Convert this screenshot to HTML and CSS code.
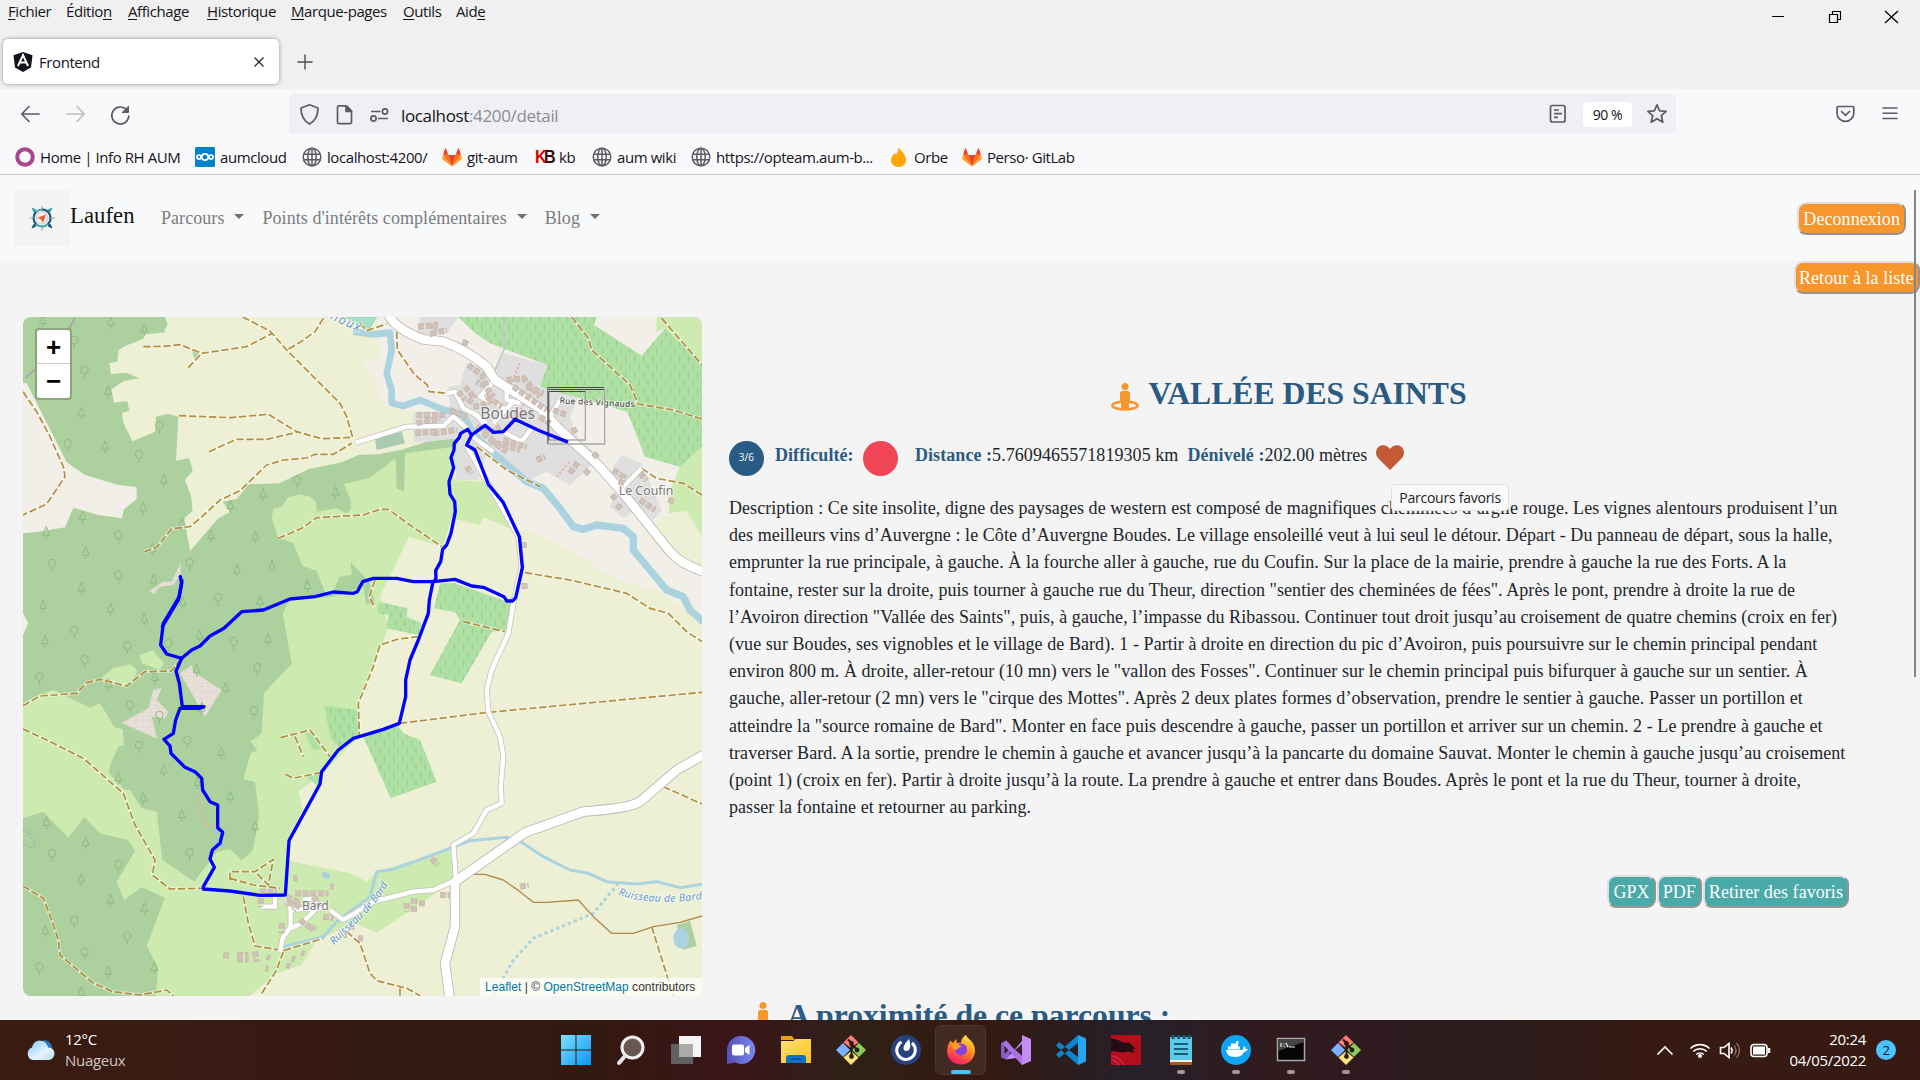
FILE: index.html
```html
<!DOCTYPE html>
<html lang="fr">
<head>
<meta charset="utf-8">
<title>Frontend</title>
<link rel="stylesheet" href="styles.css">
</head>
<body>
<svg class="defs" width="0" height="0">
  <defs>
    <symbol id="globe" viewBox="0 0 20 20"><g fill="none" stroke="#5b5b66" stroke-width="1.5"><circle cx="10" cy="10" r="8.8"/><ellipse cx="10" cy="10" rx="4.2" ry="8.8"/><path d="M1.5 7.3h17M1.5 12.7h17M10 1v18"/></g></symbol>
    <symbol id="gitlab" viewBox="0 0 20 20"><path d="M10 19.500 6.200 8h7.600z" fill="#e24329"/><path d="M10 19.500 0 12l1.200-4.500h5z" fill="#fca326"/><path d="M10 19.500 20 12l-1.200-4.500h-5z" fill="#fca326"/><path d="M10 19.500 1.200 7.500h5zM10 19.500l8.800-12h-5z" fill="#fc6d26"/><path d="M1.200 7.500 3.500.5l2.700 7zM18.800 7.500 16.500.5l-2.700 7z" fill="#e24329"/></symbol>
    <symbol id="git" viewBox="0 0 30 30"><path d="M15 0 22.500 7.500 15 13 7.500 7.500z" fill="#ff7b78"/><path d="M0 15 7 8l7 7-7 7z" fill="#7fb0ff"/><path d="m30 15-7-7-7 7 7 7z" fill="#86d05a"/><path d="M15 30 7.500 22.500 15 16l7.500 6.500z" fill="#ffe07a"/><path d="M12 4.500 15.500 8v13M15.500 9l5.500 5.500" stroke="#2c1a14" stroke-width="2" fill="none"/><circle cx="15.500" cy="8.500" r="2.400" fill="#2c1a14"/><circle cx="21" cy="15" r="2.400" fill="#2c1a14"/><circle cx="15.500" cy="21.500" r="2.400" fill="#2c1a14"/></symbol>
    <symbol id="person" viewBox="0 0 28 28"><ellipse cx="14" cy="22.500" rx="12.600" ry="4" fill="none" stroke="#f6962d" stroke-width="2.600"/><circle cx="14" cy="3.500" r="3.500" fill="#f6962d"/><path d="M11.500 8h5q2.500 0 2.500 2.500V17l-1 1v6q0 1-1 1h-6q-1 0-1-1v-6l-1-1v-6.500Q9 8 11.500 8z" fill="#f6962d"/></symbol>
    <pattern id="vine" width="27" height="48" patternUnits="userSpaceOnUse"><rect width="27" height="48" fill="#aedfa3"/><path d="M6 2v14M20 26v14" stroke="#94c48c" stroke-width="3"/></pattern>
    <pattern id="scree" width="22" height="22" patternUnits="userSpaceOnUse"><rect width="22" height="22" fill="#eae0d9"/><path d="M2 4l6 5M14 2l-4 7M17 13l-6 6M3 17l4-4M18 5l3 3" stroke="#c9bfc2" stroke-width="2"/></pattern>
    <linearGradient id="win" x1="0" y1="0" x2="1" y2="1"><stop offset="0" stop-color="#7fe0ff"/><stop offset="1" stop-color="#0a96f5"/></linearGradient>
    <linearGradient id="fox" x1=".8" y1="0" x2=".3" y2="1"><stop offset="0" stop-color="#fff04a"/><stop offset=".45" stop-color="#ff8a1d"/><stop offset="1" stop-color="#f5156c"/></linearGradient>
    <linearGradient id="cloud" x1="0" y1="0" x2="1" y2="1"><stop offset="0" stop-color="#7cc4f5"/><stop offset=".6" stop-color="#e4f4ff"/><stop offset="1" stop-color="#b9dcf5"/></linearGradient>
    <linearGradient id="folder" x1="0" y1="0" x2="1" y2="1"><stop offset="0" stop-color="#ffe07a"/><stop offset="1" stop-color="#ffc21a"/></linearGradient>
    <linearGradient id="chat" x1="0" y1="0" x2="1" y2="0"><stop offset="0" stop-color="#5450b8"/><stop offset="1" stop-color="#7b87ee"/></linearGradient>
  </defs>
</svg>

<header class="browser">
  <div class="titlebar">
    <nav class="menu"><span><u>F</u>ichier</span><span>Éditio<u>n</u></span><span><u>A</u>ffichage</span><span><u>H</u>istorique</span><span><u>M</u>arque-pages</span><span><u>O</u>utils</span><span>Aid<u>e</u></span></nav>
    <svg class="winbtns" width="130" height="24" fill="none" stroke="#000" stroke-width="1"><path d="M2 16.500h12"/><path d="M59.500 14.500h8v8h-8zM62.500 14v-2.500h8v8h-2.500" stroke-width="1.200"/><path d="M115 11l13 12M128 11l-13 12" stroke-width="1.300"/></svg>
  </div>
  <div class="tabs">
    <div class="tab">
      <svg width="20" height="20" viewBox="0 0 20 20"><path d="M10 0 19.500 3.200 18 15.500 10 20 2 15.500.5 3.200z" fill="#10121c"/><path d="M5 14 10 3l5 11M7 10.500h6" fill="none" stroke="#fff" stroke-width="1.900"/></svg>
      <span class="tab-title">Frontend</span>
      <svg width="10" height="10" stroke="#222" stroke-width="1.200"><path d="M.5.5l9 9M9.500.5l-9 9"/></svg>
    </div>
    <svg class="newtab" width="16" height="16" stroke="#4a4a55" stroke-width="1.400"><path d="M8 .5v15M.5 8h15"/></svg>
  </div>
  <div class="toolbar">
    <svg class="navicons" width="130" height="26" fill="none" stroke="#5b5b66" stroke-width="1.700" stroke-linecap="round" stroke-linejoin="round"><path d="M19 13H2M9 5.500 1.800 13 9 20.500"/><path d="M47 13h17M57 5.500 64.200 13 57 20.500" stroke="#bcbcc2"/><path d="M106 8.200a8.500 8.500 0 1 0 2.800 6.800"/><path d="M108.500 5.500v6h-6z" fill="#5b5b66" stroke-width="1"/></svg>
    <div class="urlbar">
      <svg width="90" height="24" fill="none" stroke="#5b5b66" stroke-width="1.700" stroke-linejoin="round"><path d="M9.500 2.800 18 6c0 7-2 12.500-8.500 16C3 18.500 1 13 1 6z"/><path d="M39 3.800h7.500l5 5v11.400a1.500 1.500 0 0 1-1.500 1.500H39a1.500 1.500 0 0 1-1.500-1.500V5.300a1.500 1.500 0 0 1 1.500-1.500z"/><path d="M46 4v5.500h5.500z" fill="#5b5b66"/><path d="M71 9.500h9.500M78 16.500h10"/><circle cx="85" cy="9.500" r="2.600"/><circle cx="73.500" cy="16.500" r="2.600"/></svg>
      <span class="url">localhost<i>:4200/detail</i></span>
      <svg class="reader" width="18" height="20" fill="none" stroke="#5b5b66" stroke-width="1.700"><rect x="1.500" y="1.500" width="14.500" height="16.500" rx="2"/><path d="M5 6h5M5 9.700h8M5 13.300h4" /></svg>
      <span class="zoom">90 %</span>
      <svg width="22" height="22" viewBox="0 0 22 22" fill="none" stroke="#5b5b66" stroke-width="1.700" stroke-linejoin="round"><path d="M11 1.800l2.700 6 6.500.6-4.900 4.300 1.500 6.500-5.800-3.400-5.800 3.400 1.500-6.500L1.800 8.400l6.500-.6z"/></svg>
    </div>
    <svg class="toolicons" width="66" height="20" fill="none" stroke="#5b5b66" stroke-width="1.700" stroke-linecap="round" stroke-linejoin="round"><path d="M4 2.500h14.500a1.300 1.300 0 0 1 1.300 1.300V9a8.200 8.200 0 0 1-16.800 0V3.800A1.300 1.300 0 0 1 4 2.500zM7.500 7.500l4 3.800 4-3.800"/><path d="M49 4h14M49 9.200h14M49 14.400h14" stroke-width="1.500"/></svg>
  </div>
  <div class="bookmarks">
    <span><svg width="20" height="20"><circle cx="10" cy="10" r="7.800" fill="none" stroke="#a8478f" stroke-width="4"/></svg>Home | Info RH AUM</span>
    <span><svg width="20" height="20"><rect width="20" height="20" rx="1.500" fill="#0082c9"/><g fill="none" stroke="#fff" stroke-width="1.700"><circle cx="10" cy="10" r="3.200"/><circle cx="4" cy="10" r="2"/><circle cx="16" cy="10" r="2"/></g></svg>aumcloud</span>
    <span><svg width="20" height="20"><use href="#globe"/></svg>localhost:4200/</span>
    <span><svg width="20" height="20"><use href="#gitlab"/></svg>git-aum</span>
    <span><b class="kb"><em>K</em>B</b>kb</span>
    <span><svg width="20" height="20"><use href="#globe"/></svg>aum wiki</span>
    <span><svg width="20" height="20"><use href="#globe"/></svg>https://opteam.aum-b...</span>
    <span><svg width="20" height="20"><path d="M9.500 0c2 4 7.500 7 7.500 13 0 4-3 7-7.500 7S2 17 2 13c0-3 2-5 3.500-7l1.500 2C8.500 6 9.500 3 9.500 0z" fill="#ffa400"/></svg>Orbe</span>
    <span><svg width="20" height="20"><use href="#gitlab"/></svg>Perso· GitLab</span>
  </div>
</header>

<main class="page">
  <nav class="navbar">
    <span class="logo"><svg width="28" height="28" viewBox="0 0 28 28" fill="none"><circle cx="14" cy="14" r="8.500" stroke="#3aa6a6" stroke-width="2"/><path d="M14 5.500a8.500 8.500 0 0 1 6 14.500M8 8a8.500 8.500 0 0 0 0 12" stroke="#27567f" stroke-width="2"/><circle cx="14" cy="14" r="6" stroke="#cfc6c0" stroke-width="1"/><path d="M14 2v4M14 22v5M1.500 14H6M22 14h5" stroke="#8aa"/><path d="M4 4l4 2-2 2zM24 4l-4 2 2 2z" fill="#3aa6a6" stroke="#3aa6a6"/><path d="M4 24l4-2-2-2zM24 24l-4-2 2-2z" fill="#27567f" stroke="#27567f"/><path d="M18 10.500 9 14l4 1.200L15 19z" fill="#f0582f"/></svg></span>
    <a class="brand">Laufen</a>
    <a class="item">Parcours<i></i></a>
    <a class="item">Points d'intérêts complémentaires<i></i></a>
    <a class="item">Blog<i></i></a>
    <button class="btn orange">Deconnexion</button>
  </nav>
  <div class="back"><button class="btn orange">Retour à la liste</button></div>
  <div class="content">
    <div class="map">
      <svg width="679" height="679" viewBox="69 951 2037 2037">
        <rect x="69" y="951" width="2037" height="2037" fill="#edf0d5"/>
        <g fill="#cdebb0">
          <path d="M69 1700H810V1480L1190 1355 1375 1315 1360 1440 1450 1445 1510 1530 1540 1590 1450 1552 1438 1575 1355 1555 1328 1640 1227 1610 1140 1790 1165 1880 1140 1950 1075 2110 1080 2205 975 2315 895 2375 908 2430 860 2520 865 2582 1050 2620 1100 2645 1130 2615 1350 2545 1365 2640 1220 2740 1130 2798 1065 2770 950 2820 905 2895 830 2920 750 2988H69Z"/>
          <path d="M1970 951h136v140l-111-106-27 12z"/>
        </g>
        <g transform="translate(1020 900)">
          <path fill="#f2efe9" d="M110 51 125 180 75 185 80 215 110 228 115 290 150 325 220 330 350 430 440 545 520 690 580 690 840 840 960 872 1086 970V610L995 560 1020 500 915 470 862 335 975 85 948 97 950 51Z"/>
          <path fill="#edf0d5" d="M915 710 970 650 1040 630 1086 685V830Z"/>
          <path fill="#cdebb0" d="M995 560 1020 500 1086 440V710L1040 632 985 640Z"/>
          <path fill="#e0dfdf" d="M240 51H355L320 100 230 105ZM380 190 465 210 490 160 620 195 600 260 715 290 690 350 715 420 780 470 690 555 620 515 560 545 440 460 415 540 350 540 340 430 220 425 220 335 330 335 325 260 360 255 370 220ZM820 500 845 465 905 490 965 630 940 660 900 620 850 655 810 620 830 570Z"/>
          <path fill="url(#vine)" d="M355 51H770L762 75 905 167 975 85 1086 190V440L1020 500 915 470 862 335 600 260 622 195 450 130 400 95ZM300 850 345 850 500 905 522 910 500 990 455 995 365 1150 270 1125 360 960 345 937 282 925ZM118 905 203 925 200 950 245 970 235 1005 140 985 145 945 112 940Z"/>
          <path fill="#aacbaf" d="M105 415 185 395 195 430 110 450Z"/>
          <path fill="#a9dfc9" stroke="#83cfb2" stroke-width="2" d="M15 51H110L85 90Z"/>
        </g>
        <g transform="translate(0 900)" fill="#add19e">
          <path d="M69 51H495L503 75 492 92 497 97 437 103 430 116 370 140 355 152 352 185 328 190 333 222 380 218 418 235 372 243 334 268 342 308 382 303 388 332 366 338 370 370 398 424 465 395 468 350 505 341 535 350 528 482 568 474 578 513 555 540 573 588 578 632 553 655 560 700 571 752 655 655 690 636 668 605 710 597 745 553 838 550 925 508 1025 487 1075 465 1140 462 1210 448 1280 425 1378 415 1365 440 1215 460 1212 575 1190 565 1187 475 1110 533 1032 552 1052 600 1052 630 1040 640 1010 625 950 635 948 605 930 590 900 583 865 592 845 620 820 628 815 655 835 715 880 728 907 797 950 812 975 875 1000 875 1018 830 1055 825 1052 785 1110 850 1125 910 1098 912 1090 860 1000 890 870 900 848 940 873 1080 876 1090 792 1180 785 1300 752 1325 772 1350 752 1360 730 1438 765 1445 777 1550 758 1652 725 1680 690 1648 650 1655 583 1745 487 1680 470 1535 425 1525 390 1470 375 1470 327 1420 330 1395 355 1340 372 1335 368 1288 343 1282 300 1210 270 1223 160 1170 105 1190 69 1210Z"/>
          <path d="M69 1555 130 1535 205 1613 253 1552 300 1600 383 1620 405 1653 350 1745 372 1800 425 1762 495 1793 440 1938 475 2005 467 2088H69ZM575 150 600 155 585 180ZM2030 1875l40-12 20 75-40 12Z"/>
          <path fill="#f2efe9" d="M69 248 80 250 200 487 255 525 355 555 410 562 410 597 372 628 365 655 295 645 220 623 195 682 115 695 69 700ZM69 940 85 970 69 1005Z"/>
          <path fill="#cdebb0" d="M305 1132 340 1105 390 1092 412 1110 405 1130 375 1160ZM420 1065 457 1050 492 1090 480 1110 425 1090Z"/>
          <path fill="url(#scree)" d="M541 790 543 820 520 855 480 860 462 882 448 872 490 845 515 845ZM540 1120 575 1095 580 1115 665 1170 615 1250 575 1180ZM485 1163 470 1200 505 1235 495 1255 455 1250 472 1317 365 1268 445 1225 460 1170Z"/>
          <path fill="url(#vine)" d="M973 1218 985 1218 1070 1230 1080 1305 1015 1340 990 1310ZM1090 1310 1195 1278 1210 1300 1260 1320 1310 1445 1172 1495Z"/>
          <path fill="#aedfa3" d="M915 1300 935 1295 970 1345 940 1350ZM920 1430 965 1415 955 1460Z"/>
        </g>
        <g transform="translate(0 900)" fill="none" stroke="#8fb983" stroke-width="3" class="trees"></g>
        <g transform="translate(0 900)" fill="none" stroke="#a9a0ad" stroke-width="5"><path d="M225 55 205 90M77 233 105 208"/><path stroke-dasharray="5 7" d="M69 1590 90 1600 105 1635 95 1642 69 1635"/></g>

        <g fill="none" stroke="#aad3df" stroke-linejoin="round">
          <path stroke-width="20" d="M1060 995 1120 1003 1170 998 1175 1050 1160 1120 1175 1170 1175 1210 1210 1218 1260 1200 1320 1225 1390 1245 1420 1300 1480 1360"/>
          <path stroke-width="22" d="M1480 1360 1580 1445 1630 1465 1680 1525 1720 1580 1750 1588 1790 1575 1870 1585 1900 1610 1900 1650 2000 1770 2050 1790 2070 1830 2110 1865"/>
          <path stroke-width="9" d="M850 2840 970 2810 1010 2765 1110 2690 1130 2615 1180 2608 1350 2545 1410 2522 1520 2512 1565 2527 1630 2570 1710 2610 1765 2620 1820 2645 1910 2652 1970 2645 2040 2663 2110 2652"/>
          <path stroke-width="9" stroke-dasharray="10 9" d="M1855 2650 1780 2740 1600 2815 1540 2880 1480 2988"/>
        </g>
        <ellipse cx="2044" cy="2815" rx="24" ry="31" fill="#aad3df"/><ellipse cx="978" cy="2627" rx="14" ry="9" transform="rotate(30 978 2627)" fill="#aad3df"/>

        <g class="tracks" fill="none">
          <g id="tracklines">
            <g transform="translate(0 900)"><path d="M728 51 810 93 860 150 1020 310 1040 350 1058 412M430 140 490 139 540 134 605 160 740 140 815 101M565 203 605 160M970 55 945 95 900 127 860 150M537 347 690 353 805 343 890 395 965 416 1058 412M627 455 710 418 800 418 890 397M433 755 470 742 515 686 570 680 600 655 660 600 720 572 800 495 850 480 920 474 945 463 1000 463 1055 430M69 275 110 335 150 410 190 500 195 530 140 612 69 645M835 715 905 685 950 653 1090 645 1140 628 1165 628 1230 675 1325 740M1125 840 1108 890 1125 925M1255 1010 1195 1017 1140 1035 1120 1100 1075 1210 1078 1305"/></g>
            <g transform="translate(1020 900)"><path d="M60 70 80 92 140 72M170 95 172 150 225 225 262 255 268 275 320 280M695 51 745 115 755 150 870 255 895 312 1000 330 1086 357M965 55 1086 195M905 505 950 535 1030 550 1086 585M555 818 690 840 860 880 930 925 985 940 1040 995 1086 1025M370 965 495 995M410 440 500 510 600 560"/></g>
            <g transform="translate(1020 1920)"><path d="M180 250 445 217 1086 157M970 440 1086 492M935 860 1000 1068M20 875 60 910 90 1000 110 1022 200 1045 240 1067M180 1045V1067"/></g>
            <g transform="translate(0 1920)"><path d="M69 197 120 168 230 160 260 128 300 118 380 138 435 95 515 93 540 60M69 267 150 305 250 355 370 460 405 555 465 660 457 705 510 747 605 745M69 738 130 775 155 840 175 900 180 945 280 1030 340 1055 420 1065 500 1050 520 1068M730 770 745 850 765 918 850 932 970 895M850 935 830 990 780 1068M690 720V695L765 695 820 658 805 735 765 695M690 715 760 735 840 745M842 293 930 270 990 350M885 290 910 350M857 403 880 415 960 398"/></g>
          </g>
          <use href="#tracklines" class="dash"/>
          <path class="solid" d="M1410 2623 1455 2623 1510 2640 1560 2675 1600 2707 1640 2707 1735 2700 1780 2750 1835 2800 1900 2800 1960 2780 2040 2767 2110 2747"/>
        </g>
        <path d="M595 2375 600 2440 620 2475 650 2480M1560 1090 1530 1160M1610 1160 1560 1230M1670 1430 1710 1385M1470 1170 1450 1210" fill="none" stroke="#f5a29a" stroke-width="5" stroke-dasharray="6 7"/>

        <g class="roads" fill="none" stroke-linejoin="round">
          <g class="minor"><g id="minor">
            <g transform="translate(1020 900)"><path d="M48 428 200 380 310 378 340 350 370 375 410 420 460 455M320 280 345 275 370 325 410 345 435 375M455 250 420 290 500 330M500 265 500 300 540 310M490 395 545 425 575 385M525 300 460 370M400 340 440 370M630 350 660 300M850 560 905 505M380 440 450 560 535 710 545 800 520 910 505 1000 455 1110 440 1170 445 1235 480 1310 490 1370 482 1460 485 1510 440 1530 400 1600 340 1635 348 1740 280 1770 220 1775 100 1805 10 1860 -30 1830"/></g>
            <g transform="translate(0 1920)"><path d="M857 765 872 810 872 860 848 895 840 935M872 810 930 805 985 800M872 865 905 850 955 800 940 775 910 780M785 800H825V770"/></g>
          </g></g>
          <path class="thin" d="M1520 951 1505 995 1520 1030 1485 1110"/>
          <g class="major"><g id="major"><path d="M1165 940Q1180 985 1270 1018L1330 1025Q1400 1050 1460 1100L1485 1140 1620 1225 1680 1290 1790 1390 1870 1480 2010 1655Q2040 1690 2110 1715M2110 2265 2030 2310 1920 2405Q1890 2425 1750 2435L1575 2498 1365 2645V2780L1335 2890 1350 3000"/></g></g>
          <use href="#minor" class="minor-fill"/>
          <use href="#major" class="major-fill"/>
        </g>

        <g class="buildings" fill="none">
          <g id="blds">
            <g transform="translate(1020 900)"><path d="M235 80 285 75 280 100 320 90M368 125 385 133M385 195 425 225 440 260 410 245M375 260 400 290 385 310M355 275 375 300M400 320 430 315 455 300M440 265 460 290M500 240 550 235 600 290M520 260 590 310 620 330M560 260 610 280M230 345 320 345M230 370 300 355M225 400 290 395M280 400 350 390M330 330 380 350M440 290 485 320M500 345 580 345M430 400 470 430 540 450M450 420 500 455M490 420 560 440M410 380 450 400 480 380M600 350 630 370M640 330 680 345M380 500 395 520M590 480 615 470M690 520 715 485M735 510 750 525M695 395 715 385M760 460 775 475M820 510 850 530 840 560M815 585 830 600M830 615 845 627M900 600 945 630M900 520 920 540M985 600 1005 605M545 735H560M545 858H565"/></g>
            <g transform="translate(1020 1920)"><path d="M275 655 292 675M300 765H330M200 790V815M222 775V815M238 790H258M540 740 565 736M10 885H20M30 860 45 860M55 895H68"/></g>
            <g transform="translate(0 1920)"><path d="M780 755H830M782 775V800M860 770 900 790 880 810M885 760H985M860 790H900M940 770 960 800M845 850V880M900 840 940 870M925 860 950 865M970 830 1000 835M670 945 690 948M712 945H745M712 958H745M800 950 810 955M795 985 805 985M860 975 870 980M905 938 912 942M875 955 885 958M765 935 770 965M880 715H892M990 740H1000"/></g>
          </g>
          <use href="#blds" class="core"/>
        </g>
        <path d="M653 2480q-14 12 2 20M655 2515q-16 6-4 20h20" fill="none" stroke="#8fc8ff" stroke-width="6"/>

        <g class="labels">
          <text x="1523" y="1256" font-size="47" textLength="164">Boudes</text>
          <text x="1938" y="1485" font-size="37" textLength="164">Le Coufin</text>
          <text x="946" y="2731" font-size="36" textLength="80">Bard</text>
          <text class="street" x="1791" y="1216" font-size="25" textLength="226" transform="rotate(3 1791 1216)">Rue des Vignauds</text>
          <path id="w1" d="M1002 2836 1090 2750Q1150 2690 1180 2620" fill="none"/>
          <path id="w2" d="M1854 2685Q1960 2720 2120 2696" fill="none"/>
          <path id="w3" d="M892 905Q985 960 1100 1004" fill="none"/>
          <text class="water" font-size="32"><textPath href="#w1" textLength="245">Ruisseau de Bard</textPath></text>
          <text class="water" font-size="32"><textPath href="#w2" textLength="255">Ruisseau de Bard</textPath></text>
          <text class="water" font-size="38"><textPath href="#w3" textLength="205">Couzilloux</textPath></text>
        </g>

        <g fill="none" stroke-width="4"><path stroke="#a9a9a9" d="M1814 1167V1332H1645M1756 1172V1320H1645"/><path stroke="#4a4a4a" stroke-width="3" d="M1812 1162.500H1643.500V1332M1812 1168.500H1646M1756 1174.500H1646.500V1320"/></g>
        <g fill="none" stroke="#0202ff" stroke-width="10" stroke-linejoin="round" stroke-linecap="round">
          <path d="M541 1730 545 1750 538 1790 490 1870 482 1935 500 1962 545 1975 575 1950 600 1938 630 1908 672 1885 725 1835 790 1830 870 1797 945 1790 1000 1776 1060 1780 1072 1775 1088 1745 1120 1735 1190 1735 1240 1745 1300 1745 1365 1738 1415 1758 1450 1762 1512 1790 1520 1803 1538 1803 1547 1793 1567 1703 1558 1610 1510 1508 1465 1453 1425 1350 1400 1335 1415 1305 1455 1276 1480 1297 1510 1295 1545 1258 1620 1293 1700 1325"/>
          <path d="M1415 1305 1403 1288 1382 1300 1378 1312 1363 1330 1362 1350 1353 1373 1361 1403 1347 1445 1350 1482 1364 1505 1366 1535 1353 1600 1340 1635 1328 1648 1322 1685 1307 1712 1308 1735 1298 1750 1288 1800 1285 1840 1255 1920 1230 1980 1217 2040V2090L1198 2170 1150 2188 1060 2215 1015 2250 965 2315 960 2352 867 2522 856 2685 780 2686 690 2673 610 2667V2660L643 2602 630 2577 637 2550 660 2530 668 2497 653 2483V2415L630 2405 608 2370 605 2335 585 2315 555 2302 513 2260 510 2238 492 2218 520 2200 527 2160 540 2125 600 2125 612 2120 547 2120 538 2050 528 2013 545 1975"/>
          <path d="M546 1742 535 1800 487 1880"/>
        </g>
      </svg>
      <div class="zoomctl"><span>+</span><span>−</span></div>
      <div class="attrib"><a>Leaflet</a> | © <a>OpenStreetMap</a> contributors</div>
    </div>
    <section class="detail">
      <h1><svg width="28" height="28"><use href="#person"/></svg>VALLÉE DES SAINTS</h1>
      <div class="facts">
        <span class="round blue">3/6</span><b class="diff">Difficulté:</b><span class="round red"></span><span class="dist"><b>Distance :</b>5.7609465571819305 km</span><span class="deniv"><b>Dénivelé :</b>202.00 mètres</span>
        <span class="fav"><svg width="28" height="25" viewBox="0 0 28 25"><path d="M14 25 2 13C-1 9.500-.5 4 3 1.500 6.500-1 11.500 0 14 4c2.500-4 7.500-5 11-2.500 3.500 2.500 4 8 1 11.500z" fill="#c25a38"/></svg><span class="tip">Parcours favoris</span></span>
      </div>
      <p>Description : Ce site insolite, digne des paysages de western est composé de magnifiques cheminées d’argile rouge. Les vignes alentours produisent l’un<br>des meilleurs vins d’Auvergne : le Côte d’Auvergne Boudes. Le village ensoleillé veut à lui seul le détour. Départ - Du panneau de départ, sous la halle,<br>emprunter la rue principale, à gauche. À la fourche aller à gauche, rue du Coufin. Sur la place de la mairie, prendre à gauche la rue des Forts. A la<br>fontaine, rester sur la droite, puis tourner à gauche rue du Theur, direction "sentier des cheminées de fées". Après le pont, prendre à droite la rue de<br>l’Avoiron direction "Vallée des Saints", puis, à gauche, l’impasse du Ribassou. Continuer tout droit jusqu’au croisement de quatre chemins (croix en fer)<br>(vue sur Boudes, ses vignobles et le village de Bard). 1 - Partir à droite en direction du pic d’Avoiron, puis poursuivre sur le chemin principal pendant<br>environ 800 m. À droite, aller-retour (10 mn) vers le "vallon des Fosses". Continuer sur le chemin principal puis bifurquer à gauche sur un sentier. À<br>gauche, aller-retour (2 mn) vers le "cirque des Mottes". Après 2 deux plates formes d’observation, prendre le sentier à gauche. Passer un portillon et<br>atteindre la "source romaine de Bard". Monter en face puis descendre à gauche, passer un portillon et arriver sur un chemin. 2 - Le prendre à gauche et<br>traverser Bard. A la sortie, prendre le chemin à gauche et avancer jusqu’à la pancarte du domaine Sauvat. Monter le chemin à gauche jusqu’au croisement<br>(point 1) (croix en fer). Partir à droite jusqu’à la route. La prendre à gauche et entrer dans Boudes. Après le pont et la rue du Theur, tourner à droite,<br>passer la fontaine et retourner au parking.</p>
      <div class="actions"><button class="btn teal">GPX</button><button class="btn teal">PDF</button><button class="btn teal">Retirer des favoris</button></div>
      <h2><svg width="28" height="28"><use href="#person"/></svg>A proximité de ce parcours :</h2>
    </section>
  </div>
  <div class="scrollbar"></div>
</main>

<footer class="taskbar">
  <div class="weather">
    <svg width="30" height="24" viewBox="0 0 30 24"><path d="M17 2q8 0 9 8l-6 4z" fill="#2a78c4"/><path d="M7 22a6.500 6.500 0 0 1-1-12.500C7 4 12 1 16.500 3c3 1 5 4 5.500 6.500 4.500 0 6.500 3 6.500 6S26 22 22.500 22z" fill="url(#cloud)"/></svg>
    <div><span>12°C</span><span class="dim">Nuageux</span></div>
  </div>
  <div class="apps">
    <span><svg viewBox="0 0 30 30"><path d="M0 0h14.500v14.500H0zM15.500 0H30v14.500H15.500zM0 15.500h14.500V30H0zM15.500 15.500H30V30H15.500z" fill="url(#win)"/></svg></span>
    <span><svg viewBox="0 0 30 30"><circle cx="16.500" cy="12.500" r="10.500" fill="#6b5752" stroke="#f3f3f3" stroke-width="3"/><path d="M9 21 3 28" stroke="#e5e5e5" stroke-width="4" stroke-linecap="round"/></svg></span>
    <span><svg viewBox="0 0 30 30"><path d="M0 9h22v20H0z" fill="#606060"/><path d="M8 1h22v21H8z" fill="#f4f4f4"/><path d="M8 9h14v13H8z" fill="#aaa"/></svg></span>
    <span><svg viewBox="0 0 30 30"><path d="M15 1a14 14 0 1 1-6 26.500L1 29V15A14 14 0 0 1 15 1z" fill="url(#chat)"/><rect x="6" y="9.500" width="12" height="11" rx="2" fill="#fff"/><path d="M19 13l4.500-3v10L19 17z" fill="#fff"/></svg></span>
    <span><svg viewBox="0 0 30 30"><path d="M0 1h11l3 4h-14z" fill="#e8a112"/><path d="M0 6h12l3-2h15v24H0z" fill="url(#folder)"/><path d="M5 28v-5q0-3 3-3h14q3 0 3 3v5z" fill="#0b74c9"/><path d="M10 24h10" stroke="#0a4a8a" stroke-width="1.500"/></svg></span>
    <span><svg viewBox="0 0 30 30"><use href="#git"/></svg></span>
    <span><svg viewBox="0 0 30 30"><circle cx="15" cy="15" r="15" fill="#27427e"/><path d="M10.500 7A9.300 9.300 0 1 0 21 8" fill="none" stroke="#fff" stroke-width="3"/><path d="M18 4c2 6 2 12-3 12-5-1-2-7 3-12z" fill="#fff"/></svg></span>
    <span class="active"><svg viewBox="0 0 30 30"><path d="M15 29.500C6.500 29.500 1 23.500 1 16c0-5 2-8 3.500-10.500L7 8l3-4 1 4c1-.5 3-.5 4 0 0-4 3-7 5-8 1 4 9 6 9 15.500 0 8-6 14-14 14z" fill="url(#fox)"/><circle cx="15" cy="14.500" r="6" fill="#8041dd"/><path d="M5 9c4-1 9 0 11 3-3 0-4 2-6 3-2 0-4-3-5-6z" fill="#ff9a1f"/></svg></span>
    <span><svg viewBox="0 0 30 30"><path d="M0 8 5 5.500 9 9v12l-4 3.500-5-2z" fill="#8a5cc4"/><path d="M3.500 11v8l4-4z" fill="#33202c"/><path d="M5 5.500 21 24v6L3 10z" fill="#8f5fce"/><path d="M5 24.500 21 6V0l9 4v22l-9 4v-8z" fill="#c58cf5"/><path d="M21 9v12l-7-6z" fill="#332028"/><path d="M5 5.500 21 22v8L2 9z" fill="#a871e4"/></svg></span>
    <span><svg viewBox="0 0 30 30"><path d="M22 0 30 3.500v23L22 30z" fill="#25a5f2"/><path d="M22 0 0 19.500 3 23 22 8zM22 30 0 10.500 3 7l19 15z" fill="#0d84cf"/></svg></span>
    <span><svg viewBox="0 0 30 30"><path d="M0 0h30v30H0z" fill="#b50f1c"/><path d="M0 4c6-1 10 4 15 4 2-1 4 0 6 2l4 4-4 .5 3 3h-4c-3-2-5 0-8 0s-7-2-12-1z" fill="#240c12"/><path d="M0 21q8 0 13 9M0 25q5 0 8 5" stroke="#d32450" stroke-width="1.500" fill="none"/></svg></span>
    <span class="run"><svg viewBox="0 0 30 30"><path d="M4 2h22v26H4z" fill="#5bcbe8"/><path d="M4 26h22v4H4z" fill="#a85a20"/><path d="M4 25h22v2H4z" fill="#f5f0e8"/><path d="M8 9h14M8 14h14M8 19h14" stroke="#135d78" stroke-width="1.800"/><path d="M7 0v4M12.500 0v4M18 0v4M23 0v4" stroke="#135d78" stroke-width="3"/></svg></span>
    <span class="run"><svg viewBox="0 0 30 30"><circle cx="15" cy="15" r="15" fill="#0ea5f7"/><path d="M5 15h16c2 0 1-3 2-4 1 1 2 2 2 3h2c-1 2-3 3-4 3-2 4-5 5-9 5-6 0-9-3-9-7zM7 11.500h12v3H7zM10 8.500h7v3h-7zM15 6h2.500v3H15z" fill="#fff"/></svg></span>
    <span class="run"><svg viewBox="0 0 30 30"><rect x="1.500" y="3.500" width="27" height="22" fill="#050505" stroke="#a9a9a9" stroke-width="1.500"/><path d="M2 4h26v3L2 16z" fill="#444"/><path d="M5 8v4M8 8.500v1M8 11v1M10 8l2 4M13 12h6" stroke="#eee" stroke-width="1.200"/></svg></span>
    <span class="run"><svg viewBox="0 0 30 30"><use href="#git"/></svg></span>
  </div>
  <div class="tray">
    <svg width="120" height="24" fill="none" stroke="#fff" stroke-width="1.600"><path d="M2.500 16.500 10 9l7.500 7.500"/><path d="M35.500 10.500a13.500 13.500 0 0 1 19 0M38.200 13.500a9.800 9.800 0 0 1 13.600 0M41.200 16.500a5.500 5.500 0 0 1 7.600 0"/><circle cx="45" cy="18" r="2" fill="#fff" stroke="none"/><path d="M65.500 9.500H69l5-4v14l-5-4h-3.500zM76 9.500q2 3 0 6"/><path d="M79 7.500q4 5 0 10M81.500 5q6 7 0 15" stroke="#8a7570" stroke-width="1.200"/><rect x="96" y="6.500" width="16" height="12" rx="3"/><rect x="98" y="8.500" width="12" height="8" fill="#fff" stroke="none"/><path d="M114 10v5" stroke-width="2.500"/></svg>
    <div class="clock"><span>20:24</span><span>04/05/2022</span></div>
    <b class="badge">2</b>
  </div>
</footer>
<script src="trees.js"></script>
</body>
</html>
```
FILE: styles.css
```css
* { box-sizing: border-box; }
body { margin: 0; width: 1920px; height: 1080px; overflow: hidden; display: flex; flex-direction: column; background: #f4f4f4; font-family: "Liberation Serif", serif; }
.defs { position: absolute; }
svg { display: block; flex: none; }
u { text-underline-offset: 2px; text-decoration-thickness: 1px; }

.browser { height: 175px; flex: none; background: #f9f9fb; border-bottom: 1px solid #ccc; font: 15px "Open Sans", sans-serif; letter-spacing: -.42px; color: #15141a; }
.titlebar { display: flex; justify-content: space-between; height: 34px; background: #f0f0f0; padding: 0 20px 0 8px; }
.menu { display: grid; grid-template-columns: 58px 62px 79px 84px 112px 53px auto; line-height: 23px; height: 23px; white-space: nowrap; }
.tabs { display: flex; align-items: flex-start; height: 55px; background: #f0f0f0; padding: 5px 0 0 3px; }
.tab { display: flex; align-items: center; width: 276px; height: 45px; background: #fff; border-radius: 5px; box-shadow: 0 0 4px rgba(0,0,0,.4); padding: 0 15px 0 10px; gap: 6px; }
.tab-title { flex: 1; }
.newtab { margin: 15px 0 0 18px; }
.toolbar { display: flex; align-items: center; height: 50px; padding-left: 20px; }
.urlbar { display: flex; align-items: center; width: 1387px; height: 40px; margin-left: 139px; padding: 0 8px 0 11px; background: #f0f0f4; border-radius: 5px; }
.url { flex: 1; margin-left: 11px; padding-top: 2px; font-size: 17px; letter-spacing: -.36px; }
.url i { font-style: normal; color: #8b8b93; }
.reader { margin-right: 16px; }
.zoom { width: 49px; height: 25px; margin-right: 14px; background: #fff; border-radius: 4px; text-align: center; font-size: 14px; line-height: 25px; }
.toolicons { margin-left: 158px; }
.bookmarks { display: grid; grid-template-columns: 180px 107px 140px 93px 57px 99px 198px 73px auto; height: 35px; padding-left: 15px; white-space: nowrap; }
.bookmarks > span { display: flex; align-items: center; gap: 5px; }
.kb { width: 19px; font: bold 19px "Liberation Sans", sans-serif; letter-spacing: -3px; color: #3a0d10; transform: scaleX(.85); transform-origin: left; }
.kb em { font-style: normal; color: #d40000; }

.page { position: relative; height: 845px; overflow: hidden; font-size: 18px; letter-spacing: .062px; color: #212529; }
.navbar { display: flex; align-items: center; height: 86px; padding: 0 14px; background: #f8f9fb; }
.logo { display: flex; align-items: center; justify-content: center; width: 56px; height: 56px; background: #f4f4f4; }
.brand { width: 91px; font-size: 22.700px; color: #111; margin-top: -4px; }
.item { display: flex; align-items: center; gap: 10px; margin-right: 18px; color: #7b7c7d; white-space: nowrap; }
.item i { border: 5px solid transparent; border-top-color: #6f7071; border-bottom: 0; margin-top: -3px; }
.btn { height: 33px; border: 2px solid; border-color: #e0dede #989393 #989393 #e0dede; border-radius: 9px; padding: 0 4px; color: #fff; font: 18px "Liberation Serif", serif; letter-spacing: .062px; line-height: 28px; white-space: nowrap; }
.orange { background: #f6962d; }
.teal { background: #4aa9a9; }
.navbar .btn { margin: 1px 0 0 auto; }
.back { display: flex; justify-content: flex-end; height: 33px; }
.back .btn { width: 126px; padding: 0 3px; text-align: left; }
.scrollbar { position: absolute; right: 4px; top: 15px; width: 2px; height: 487px; background: #858585; }

.content { display: flex; gap: 27px; padding: 23px 0 0 23px; }
.map { position: relative; flex: none; width: 679px; height: 679px; border-radius: 8px; overflow: hidden; letter-spacing: 0; }
.trees, .tracks { stroke-linejoin: round; }
.tracks { stroke: #fff; stroke-opacity: .5; stroke-width: 10; }
.tracks .dash { stroke: #b28d3c; stroke-opacity: 1; }
.tracks .solid { stroke: #b0894a; stroke-opacity: 1; stroke-width: 4; }
.tracks .dash { stroke-width: 5; stroke-dasharray: 22 8; }
.minor { stroke: #c6c5bd; stroke-width: 18; }
.major { stroke: #b9b8b2; stroke-width: 31; }
.minor-fill { stroke: #fff; stroke-width: 13; }
.major-fill { stroke: #fff; stroke-width: 26; }
.thin { stroke: #c5c5c5; stroke-width: 5; }
.buildings { stroke: #bda99b; stroke-width: 17; stroke-dasharray: 17 6; }
.buildings .core { stroke: #d0c2b8; stroke-width: 14; }
.labels { font-family: "Noto Sans", sans-serif; fill: #777; stroke: rgba(255,255,255,.6); stroke-width: 6; paint-order: stroke; text-anchor: middle; }
.labels path { stroke: none; }
.labels .street { fill: #333; }
.labels .water { fill: #6699cc; font-style: italic; text-anchor: start; }
.zoomctl { position: absolute; left: 12px; top: 11px; width: 37px; height: 72px; background: #fff; border: 2px solid #8ba67f; border-radius: 4px; font: bold 26px/34px "Liberation Sans", sans-serif; color: #000; text-align: center; background-clip: padding-box; }
.zoomctl span { display: block; height: 34px; }
.zoomctl span:first-child { border-bottom: 1px solid #ccc; }
.attrib { position: absolute; right: 0; bottom: 0; width: 222px; height: 18px; background: rgba(255,255,255,.7); font: 12px/18px "Liberation Sans", sans-serif; letter-spacing: .04px; color: #333; padding-left: 5px; white-space: nowrap; }
.attrib a { color: #0078a8; }

.detail { width: 1120px; }
h1, h2 { display: flex; align-items: center; margin: 0; font-size: 31.700px; line-height: 40px; letter-spacing: 0; color: #2a5b84; white-space: nowrap; }
h1 { justify-content: center; gap: 9px; padding-top: 57px; }
h1 svg { margin-top: 6px; }
.facts { display: flex; align-items: center; height: 36px; margin-top: 26px; line-height: 27px; white-space: nowrap; }
.facts b { color: #2a5b84; }
.diff, .dist, .deniv { margin-top: -5px; }
.round { width: 35px; height: 35px; border-radius: 50%; }
.blue { background: #2a5b84; color: #fff; font: 10px/32px "Open Sans", sans-serif; text-align: center; }
.red { background: #f04658; }
.diff { width: 88px; margin-left: 11px; }
.dist { margin-left: 17px; }
.deniv { margin-left: 9px; }
.fav { position: relative; margin: -2px 0 0 9px; }
.tip { position: absolute; left: 15px; top: 39px; height: 27px; width: 118px; padding-left: 7px; background: #f9f9f9; border: 1px solid #e2e2e2; border-radius: 4px; font: 14px/25px "Open Sans", sans-serif; letter-spacing: -.25px; color: #222; }
p { margin: 19px 0 0; line-height: 27.180px; white-space: nowrap; }
.actions { display: flex; justify-content: flex-end; gap: 1px; margin-top: 54px; }
h2 { margin-top: 88px; padding-left: 20px; gap: 10px; }

.taskbar { display: flex; align-items: center; height: 60px; flex: none; padding-left: 26px; font: 15px/21px "Open Sans", sans-serif; letter-spacing: -.3px; color: #fff; background: linear-gradient(90deg, #3a1b12 0, #351b12 25%, #32190f 30%, #3a1518 38%, #2f2118 44%, #34190f 51%, #26202a 59%, #301b1f 66%, #2e1b1f 73%, #2c1c1c 79%, #371a12 86%, #371a12 100%); }
.taskbar span { display: block; }
.weather { display: flex; align-items: center; gap: 9px; width: 522px; }
.dim { color: #cfc5c2; }
.apps { display: flex; height: 60px; }
.apps > span { position: relative; width: 55px; height: 60px; padding: 15px 12.500px; }
.apps svg { width: 30px; height: 30px; overflow: visible; }
.active::before { content: ""; position: absolute; inset: 5px 2px; border: 1px solid #50352b; border-radius: 6px; background: rgba(255,255,255,.07); }
.active svg { position: relative; }
.active::after, .run::after { content: ""; position: absolute; left: 18px; bottom: 6px; width: 20px; height: 4px; border-radius: 2px; background: #4cc2ff; }
.run::after { left: 24px; width: 8px; background: #a09894; }
.tray { display: flex; align-items: center; margin-left: 282px; }
.clock { width: 91px; text-align: right; }
.badge { width: 20px; height: 20px; margin-left: 10px; border-radius: 50%; background: #4cc2ff; color: #111; font: 13px/20px "Open Sans", sans-serif; text-align: center; }
```
FILE: trees.js
```js
const pines = [[128,60],[332,65],[433,85],[325,272],[244,337],[315,438],[491,538],[430,622],[248,648],[139,695],[257,755],[244,862],[461,838],[129,915],[332,925],[433,955],[135,1020],[548,905],[633,705],[766,708],[711,808],[816,797],[922,855],[780,902],[599,1005],[803,1015],[545,670],[457,745],[789,580],[1007,575],[691,615],[590,1108],[464,1130],[677,1162],[664,1355],[491,1408],[355,1432],[430,1492],[545,1542],[691,1488],[765,1578],[592,1445],[139,1565],[257,1625],[244,1735],[332,1798],[433,1823],[136,1890],[325,2012],[463,2000],[244,2075],[605,1222],[325,1150]];
const oaks = [[223,120],[254,210],[478,376],[203,430],[417,463],[891,540],[355,705],[156,790],[355,825],[569,787],[654,892],[223,990],[382,1037],[505,1030],[701,1025],[254,1078],[118,1130],[390,1215],[772,1102],[762,1232],[562,1320],[417,1335],[478,1245],[156,1660],[355,1693],[569,1657],[223,1860],[382,1908],[254,1955],[118,2000]];
const path = document.createElementNS("http://www.w3.org/2000/svg", "path");
path.setAttribute("d",
  pines.map(([x, y]) => `M${x} ${y - 15}l10 26h-20zM${x} ${y + 11}v11`).join("") +
  oaks.map(([x, y]) => `M${x - 11} ${y}a11 12 0 1 0 22 0a11 12 0 1 0-22 0M${x} ${y + 12}v14`).join(""));
document.querySelector(".trees").append(path);
```
